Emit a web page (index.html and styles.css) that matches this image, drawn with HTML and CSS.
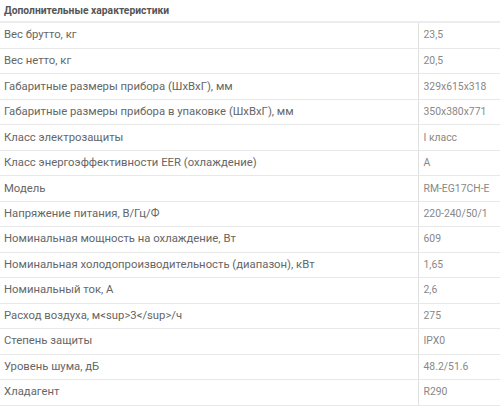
FILE: index.html
```html
<!DOCTYPE html>
<html lang="ru">
<head>
<meta charset="utf-8">
<link rel="stylesheet" href="styles.css">
</head>
<body>
<div class="specs">
  <div class="specs-title">Дополнительные характеристики</div>
  <table class="specs-table">
    <colgroup><col class="col-name"><col class="col-val"></colgroup>
    <tr><td class="name">Вес брутто, кг</td><td class="val">23,5</td></tr>
    <tr><td class="name">Вес нетто, кг</td><td class="val">20,5</td></tr>
    <tr><td class="name">Габаритные размеры прибора (ШхВхГ), мм</td><td class="val">329x615x318</td></tr>
    <tr><td class="name">Габаритные размеры прибора в упаковке (ШхВхГ), мм</td><td class="val">350x380x771</td></tr>
    <tr><td class="name">Класс электрозащиты</td><td class="val">I класс</td></tr>
    <tr><td class="name">Класс энергоэффективности EER (охлаждение)</td><td class="val">A</td></tr>
    <tr><td class="name">Модель</td><td class="val">RM-EG17CH-E</td></tr>
    <tr><td class="name">Напряжение питания, В/Гц/Ф</td><td class="val">220-240/50/1</td></tr>
    <tr><td class="name">Номинальная мощность на охлаждение, Вт</td><td class="val">609</td></tr>
    <tr><td class="name">Номинальная холодопроизводительность (диапазон), кВт</td><td class="val">1,65</td></tr>
    <tr><td class="name">Номинальный ток, А</td><td class="val">2,6</td></tr>
    <tr><td class="name">Расход воздуха, м&lt;sup&gt;3&lt;/sup&gt;/ч</td><td class="val">275</td></tr>
    <tr><td class="name">Степень защиты</td><td class="val">IPX0</td></tr>
    <tr><td class="name">Уровень шума, дБ</td><td class="val">48.2/51.6</td></tr>
    <tr><td class="name">Хладагент</td><td class="val">R290</td></tr>
  </table>
</div>
</body>
</html>
```
FILE: styles.css
```css
html, body {
  margin: 0;
  padding: 0;
  background: #fff;
}
body {
  font-family: Roboto, "Liberation Sans", sans-serif;
  font-size: 11.3px;
}
.specs {
  width: 500px;
}
.specs-title {
  height: 21px;
  line-height: 21px;
  padding: 0 4px;
  font-size: 10.3px;
  font-weight: bold;
  color: #555;
  border-bottom: 2px solid #ececec;
}
.specs-table {
  width: 100%;
  table-layout: fixed;
  border-collapse: collapse;
  border-spacing: 0;
}
.col-name {
  width: 418px;
}
.specs-table td {
  height: 25.47px;
  box-sizing: border-box;
  border-bottom: 1px solid #e8e8e8;
  vertical-align: middle;
  line-height: 16px;
  white-space: nowrap;
  overflow: hidden;
}
.name {
  color: #666;
  padding: 0 4px;
}
.val {
  color: #888;
  font-size: 10.4px;
  padding: 0 5px;
  border-left: 1px solid #e0e0e0;
}
```
